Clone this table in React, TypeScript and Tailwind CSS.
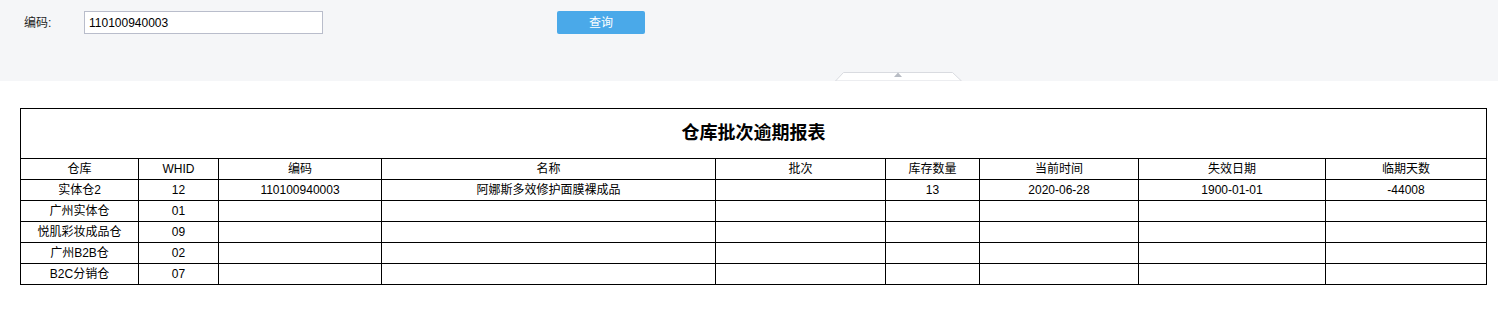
import React from 'react';

interface StockRow {
  warehouse: string;
  whid: string;
  code: string;
  name: string;
  batch: string;
  qty: string;
  now: string;
  expire: string;
  days: string;
}

const columns = [
  { title: '仓库', width: 'w-[118px]' },
  { title: 'WHID', width: 'w-[80px]' },
  { title: '编码', width: 'w-[163px]' },
  { title: '名称', width: 'w-[334px]' },
  { title: '批次', width: 'w-[170px]' },
  { title: '库存数量', width: 'w-[94px]' },
  { title: '当前时间', width: 'w-[159px]' },
  { title: '失效日期', width: 'w-[187px]' },
  { title: '临期天数', width: 'w-[161px]' },
];

const rows: StockRow[] = [
  {
    warehouse: '实体仓2',
    whid: '12',
    code: '110100940003',
    name: '阿娜斯多效修护面膜裸成品',
    batch: '',
    qty: '13',
    now: '2020-06-28',
    expire: '1900-01-01',
    days: '-44008',
  },
  { warehouse: '广州实体仓', whid: '01', code: '', name: '', batch: '', qty: '', now: '', expire: '', days: '' },
  { warehouse: '悦肌彩妆成品仓', whid: '09', code: '', name: '', batch: '', qty: '', now: '', expire: '', days: '' },
  { warehouse: '广州B2B仓', whid: '02', code: '', name: '', batch: '', qty: '', now: '', expire: '', days: '' },
  { warehouse: 'B2C分销仓', whid: '07', code: '', name: '', batch: '', qty: '', now: '', expire: '', days: '' },
];

const cell = 'border border-black h-[21px] p-0 text-center align-middle leading-[20px] whitespace-nowrap overflow-hidden';

const App: React.FC = () => {
  return (
    <div className="w-[1498px] h-[317px] bg-white text-[12px] text-black font-['Liberation_Sans','Noto_Sans_CJK_SC',sans-serif]">
      <div className="relative h-[81px] bg-[#f5f6f8]">
        <div className="flex items-center pt-[11px] h-[34px]">
          <span className="ml-[24px] w-[60px] text-[#222]">编码:</span>
          <input
            type="text"
            defaultValue="110100940003"
            className="w-[239px] h-[23px] border border-[#b9bdcb] bg-white px-[4px] text-[12px] text-black outline-none"
          />
          <button className="ml-[234px] w-[88px] h-[23px] rounded-[2px] bg-[#4aa9e9] text-white text-[12px]">
            查询
          </button>
        </div>
        <svg className="absolute left-[835px] top-[71px]" width="127" height="10" viewBox="0 0 127 10">
          <path d="M0.5 10 L8.5 1.5 L117.5 1.5 L126.5 10 Z" fill="#ffffff" stroke="#d9dbe0" strokeWidth="1" />
          <path d="M59 6 L63 1.5 L67 6 Z" fill="#b8bcc4" />
        </svg>
      </div>

      <div className="pt-[27px] pl-[20px]">
        <table className="table-fixed border-collapse w-[1466px]">
          <colgroup>
            {columns.map((c) => (
              <col key={c.title} className={c.width} />
            ))}
          </colgroup>
          <tbody>
            <tr>
              <td
                colSpan={9}
                className="border border-black h-[50px] p-0 text-center align-middle text-[18px] font-bold font-['Liberation_Serif','Noto_Sans_CJK_SC',serif]"
              >
                仓库批次逾期报表
              </td>
            </tr>
            <tr>
              {columns.map((c) => (
                <td key={c.title} className={cell}>
                  {c.title}
                </td>
              ))}
            </tr>
            {rows.map((r) => (
              <tr key={r.warehouse}>
                <td className={cell}>{r.warehouse}</td>
                <td className={cell}>{r.whid}</td>
                <td className={cell}>{r.code}</td>
                <td className={cell}>{r.name}</td>
                <td className={cell}>{r.batch}</td>
                <td className={cell}>{r.qty}</td>
                <td className={cell}>{r.now}</td>
                <td className={cell}>{r.expire}</td>
                <td className={cell}>{r.days}</td>
              </tr>
            ))}
          </tbody>
        </table>
      </div>
    </div>
  );
};

export default App;
